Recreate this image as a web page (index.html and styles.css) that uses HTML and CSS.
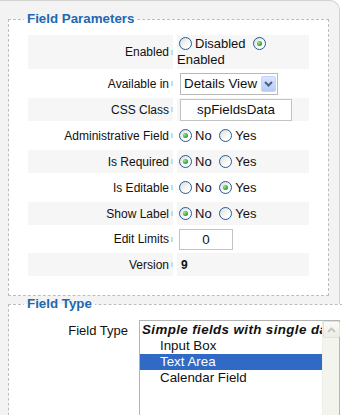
FILE: index.html
```html
<!DOCTYPE html>
<html lang="en">
<head>
  <meta charset="UTF-8" />
  <title>Field Parameters</title>
  <link rel="stylesheet" href="styles.css">
</head>
<body>

<div class="panel">
  <!-- Field Parameters -->
  <fieldset class="box">
    <legend>Field Parameters</legend>

    <div class="row tall shade">
      <div class="label">Enabled<i class="tip"></i></div>
      <div class="value"><span class="line"><span class="radio"></span>Disabled <span class="radio on"></span> Enabled</span></div>
    </div>

    <div class="row">
      <div class="label">Available in<i class="tip"></i></div>
      <div class="value">
        <div class="select">
          <span class="select-text">Details View</span>
          <span class="select-btn">
            <svg width="9" height="6" viewBox="0 0 9 6"><polyline points="1,1 4.5,4.5 8,1" fill="none" stroke="#4d6185" stroke-width="2"/></svg>
          </span>
        </div>
      </div>
    </div>

    <div class="row shade">
      <div class="label">CSS Class<i class="tip"></i></div>
      <div class="value"><span class="input wide">spFieldsData</span></div>
    </div>

    <div class="row">
      <div class="label">Administrative Field<i class="tip"></i></div>
      <div class="value"><span class="line"><span class="radio on"></span>No <span class="radio"></span>Yes</span></div>
    </div>

    <div class="row shade">
      <div class="label">Is Required<i class="tip"></i></div>
      <div class="value"><span class="line"><span class="radio on"></span>No <span class="radio"></span>Yes</span></div>
    </div>

    <div class="row">
      <div class="label">Is Editable<i class="tip"></i></div>
      <div class="value"><span class="line"><span class="radio"></span>No <span class="radio on"></span>Yes</span></div>
    </div>

    <div class="row shade">
      <div class="label">Show Label<i class="tip"></i></div>
      <div class="value"><span class="line"><span class="radio on"></span>No <span class="radio"></span>Yes</span></div>
    </div>

    <div class="row short">
      <div class="label">Edit Limits<i class="tip"></i></div>
      <div class="value"><span class="input small">0</span></div>
    </div>

    <div class="row shade">
      <div class="label">Version<i class="tip"></i></div>
      <div class="value"><b class="version">9</b></div>
    </div>
  </fieldset>

  <!-- Field Type -->
  <fieldset class="box type-box">
    <legend>Field Type</legend>
    <div class="type-row">
      <div class="type-label">Field Type</div>
      <div class="listbox">
        <div class="list">
          <div class="group">Simple fields with single data</div>
          <div class="option">Input Box</div>
          <div class="option selected">Text Area</div>
          <div class="option">Calendar Field</div>
        </div>
        <div class="scrollbar">
          <div class="scroll-up">
            <svg width="9" height="6" viewBox="0 0 9 6"><polyline points="1,5 4.5,1.5 8,5" fill="none" stroke="#c8c8c0" stroke-width="2"/></svg>
          </div>
        </div>
      </div>
    </div>
  </fieldset>
</div>

</body>
</html>
```

FILE: styles.css
```css
* {
  margin: 0;
  padding: 0;
  box-sizing: border-box;
  font-family: "Liberation Sans", Arial, sans-serif;
}

html, body {
  background: #fff;
  overflow: hidden;
}

body {
  width: 342px;
  height: 415px;
  color: #111;
  font-size: 12px;
}

.panel {
  width: 340px;
  min-height: 430px;
  background: #f3f3f3;
  border-top: 1px solid #d2d2d2;
  border-right: 1px solid #d2d2d2;
  border-radius: 0 10px 0 0;
  padding: 10px 10px 0 8px;
}

.box {
  border: 1px dashed #bdbdbd;
  background: #fff;
  padding: 8px 19px 19px 19px;
}

.box legend {
  font-size: 13.33px;
  font-weight: bold;
  line-height: 16px;
  color: #2268b0;
  padding: 0 3px;
  margin-left: -4px;
}

.row {
  display: grid;
  grid-template-columns: 145px 132px;
  column-gap: 4px;
  height: 23px;
  margin-bottom: 3px;
}

.row.tall {
  height: 34px;
}

.row.short {
  height: 22px;
}

.row:last-of-type {
  margin-bottom: 0;
}

.row.shade .label,
.row.shade .value {
  background: #f6f6f6;
}

.label {
  display: flex;
  justify-content: flex-end;
  align-items: center;
  font-size: 12px;
  white-space: nowrap;
}

.tip {
  display: inline-block;
  width: 2px;
  height: 5px;
  margin-left: 2px;
  background: #b6e2f7;
}

.value {
  display: flex;
  align-items: center;
  font-size: 13px;
}

.line {
  line-height: 16px;
}

.radio {
  display: inline-block;
  width: 13px;
  height: 13px;
  border: 1px solid #2a5a8a;
  border-radius: 50%;
  background: linear-gradient(135deg, #dcdcd6, #fff 70%);
  vertical-align: -2px;
  margin: 0 3px 0 4px;
  position: relative;
}

.line > .radio:first-child {
  margin-left: 2px;
}

.radio.on::after {
  content: "";
  position: absolute;
  left: 3px;
  top: 3px;
  width: 5px;
  height: 5px;
  border-radius: 50%;
  background: radial-gradient(circle at 35% 35%, #9be59b, #21a121 70%);
}

.select {
  display: flex;
  align-items: center;
  width: 98px;
  height: 22px;
  margin-left: 3px;
  border: 1px solid #b9b9b9;
  background: #fff;
}

.select-text {
  flex: 1;
  padding-left: 3px;
  font-size: 13.33px;
}

.select-btn {
  display: flex;
  align-items: center;
  justify-content: center;
  width: 15px;
  height: 16px;
  margin-right: 1px;
  border: 1px solid #c3d3fd;
  border-radius: 2px;
  background: linear-gradient(#dbe5fd, #b6cbf7);
}

.input {
  display: inline-block;
  height: 22px;
  line-height: 20px;
  border: 1px solid #c3c3c3;
  background: #fff;
  text-align: center;
  font-size: 13.33px;
}

.input.wide {
  width: 112px;
  margin-left: 3px;
}

.input.small {
  width: 54px;
  height: 21px;
  line-height: 19px;
  margin-left: 2px;
}

.version {
  margin-left: 4px;
  font-size: 12px;
}

.type-box {
  width: 390px;
  padding-top: 8px;
  min-height: 130px;
}

.type-row {
  display: flex;
  gap: 11px;
}

.type-label {
  width: 100px;
  text-align: right;
  font-size: 13px;
  line-height: 16px;
  padding-top: 3px;
}

.listbox {
  display: flex;
  width: 201px;
  height: 110px;
  border: 1px solid #b4b4b4;
  background: #fff;
}

.list {
  flex: 1;
  min-width: 0;
  padding-top: 1px;
  font-size: 13.33px;
  line-height: 16px;
  overflow: hidden;
  white-space: nowrap;
}

.group {
  font-weight: bold;
  font-style: italic;
  letter-spacing: 0.4px;
  padding-left: 2px;
}

.option {
  padding-left: 20px;
}

.option.selected {
  background: #316ac5;
  color: #fff;
}

.scrollbar {
  width: 17px;
  background: #f4f4ef;
  border-left: 1px solid #eeeee8;
}

.scroll-up {
  display: flex;
  align-items: center;
  justify-content: center;
  width: 17px;
  height: 17px;
  border: 1px solid #e2e2dc;
  border-radius: 2px;
  background: linear-gradient(#fbfbf8, #ecece6);
}
```
